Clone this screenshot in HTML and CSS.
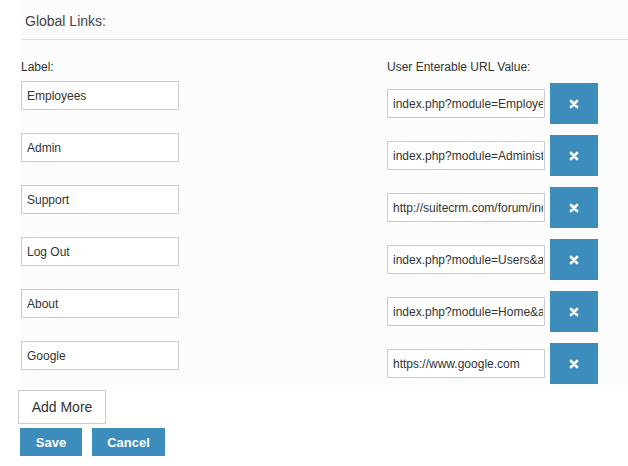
FILE: index.html
```html
<!DOCTYPE html>
<html>
<head>
<meta charset="utf-8">
<link rel="stylesheet" href="styles.css">
</head>
<body>
<div class="panel">
  <div class="title">Global Links:</div>
  <div class="heads">
    <span class="head-label">Label:</span>
    <span class="head-url">User Enterable URL Value:</span>
  </div>
  <div class="rows">
    <div class="row">
      <input class="label-input" value="Employees">
      <input class="url-input" value="index.php?module=Employees&amp;action=index">
      <button class="del"><svg viewBox="0 0 10 10" width="10" height="10"><path d="M2 2L8 8M8 2L2 8"/></svg></button>
    </div>
    <div class="row">
      <input class="label-input" value="Admin">
      <input class="url-input" value="index.php?module=Administration&amp;action=index">
      <button class="del"><svg viewBox="0 0 10 10" width="10" height="10"><path d="M2 2L8 8M8 2L2 8"/></svg></button>
    </div>
    <div class="row">
      <input class="label-input" value="Support">
      <input class="url-input" value="http://suitecrm.com/forum/index">
      <button class="del"><svg viewBox="0 0 10 10" width="10" height="10"><path d="M2 2L8 8M8 2L2 8"/></svg></button>
    </div>
    <div class="row">
      <input class="label-input" value="Log Out">
      <input class="url-input" value="index.php?module=Users&amp;action=Logout">
      <button class="del"><svg viewBox="0 0 10 10" width="10" height="10"><path d="M2 2L8 8M8 2L2 8"/></svg></button>
    </div>
    <div class="row">
      <input class="label-input" value="About">
      <input class="url-input" value="index.php?module=Home&amp;action=About">
      <button class="del"><svg viewBox="0 0 10 10" width="10" height="10"><path d="M2 2L8 8M8 2L2 8"/></svg></button>
    </div>
    <div class="row">
      <input class="label-input" value="Google">
      <input class="url-input" value="https://www.google.com">
      <button class="del"><svg viewBox="0 0 10 10" width="10" height="10"><path d="M2 2L8 8M8 2L2 8"/></svg></button>
    </div>
  </div>
</div>
<div class="add-wrap"><button class="add">Add More</button></div>
<div class="actions">
  <button class="btn btn-save">Save</button>
  <button class="btn btn-cancel">Cancel</button>
</div>
</body>
</html>
```
FILE: styles.css
```css
html, body {
  margin: 0;
  padding: 0;
  background: #ffffff;
  font-family: "Liberation Sans", Arial, sans-serif;
  color: #333333;
}
.panel {
  margin-left: 20px;
  padding-left: 1px;
  padding-bottom: 2px;
  background: #fcfcfc;
}
.title {
  padding: 13px 0 10px 4px;
  font-size: 14px;
  line-height: 16px;
  color: #444444;
  border-bottom: 1px solid #dddddd;
}
.heads {
  display: flex;
  margin-top: 20px;
  font-size: 12px;
  line-height: 14px;
  color: #333333;
}
.head-label {
  width: 366px;
}
.rows {
  display: flex;
  flex-direction: column;
  gap: 9px;
  margin-top: 7px;
}
.row {
  display: flex;
  align-items: flex-start;
  height: 43px;
}
.label-input, .url-input {
  box-sizing: border-box;
  width: 158px;
  height: 29px;
  padding: 0 1px 0 5px;
  border: 1px solid #cccccc;
  background: #ffffff;
  font-family: "Liberation Sans", Arial, sans-serif;
  font-size: 12px;
  color: #333333;
  outline: none;
  margin: 0;
}
.label-input {
  margin-right: 208px;
}
.url-input {
  margin-top: 8px;
}
.del {
  box-sizing: border-box;
  width: 48px;
  height: 41px;
  margin: 2px 0 0 5px;
  padding: 0;
  border: none;
  background: #3c8dbc;
  display: flex;
  align-items: center;
  justify-content: center;
}
.del svg path {
  stroke: #ffffff;
  stroke-width: 2.8;
  stroke-linecap: round;
  fill: none;
}
.add-wrap {
  margin: 4px 0 0 18px;
}
.add {
  box-sizing: border-box;
  height: 34px;
  width: 88px;
  padding: 0;
  border: 1px solid #cccccc;
  background: #ffffff;
  font-family: "Liberation Sans", Arial, sans-serif;
  font-size: 14px;
  color: #333333;
}
.actions {
  display: flex;
  gap: 10px;
  margin: 4px 0 0 20px;
}
.btn {
  box-sizing: border-box;
  height: 28px;
  padding: 0;
  border: none;
  background: #3c8dbc;
  color: #ffffff;
  font-family: "Liberation Sans", Arial, sans-serif;
  font-size: 13px;
  font-weight: bold;
}
.btn-save {
  width: 62px;
}
.btn-cancel {
  width: 73px;
}
```
